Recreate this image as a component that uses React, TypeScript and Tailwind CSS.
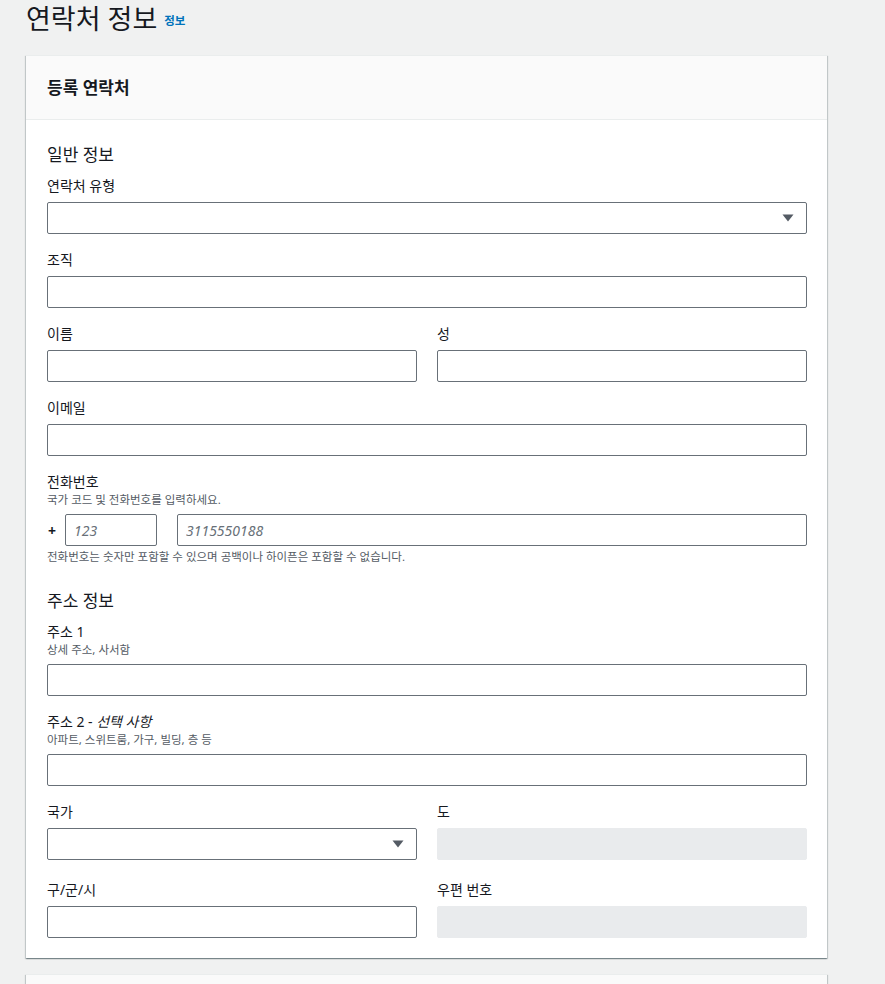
import React from "react";

const font = { fontFamily: '"Noto Sans", "Noto Sans CJK KR", sans-serif' };

function Label({ children, desc }: { children: React.ReactNode; desc?: string }) {
  return (
    <div className="mb-[6px]">
      <div className="text-[14px] leading-[20px] text-[#16191f]">{children}</div>
      {desc && <div className="text-[11.5px] leading-[16px] text-[#545b64]">{desc}</div>}
    </div>
  );
}

function TextInput({ placeholder, disabled }: { placeholder?: string; disabled?: boolean }) {
  if (disabled) {
    return <div className="h-[32px] w-full rounded-[2px] border border-[#e9ebed] bg-[#e9ebed]" />;
  }
  return (
    <input
      placeholder={placeholder}
      className="h-[32px] w-full rounded-[2px] border border-[#687078] bg-white px-[8px] text-[14px] text-[#16191f] outline-none placeholder:italic placeholder:text-[#687078]"
    />
  );
}

function Select() {
  return (
    <div className="relative flex h-[32px] w-full items-center justify-end rounded-[2px] border border-[#687078] bg-white pr-[12px]">
      <svg width="12" height="8" viewBox="0 0 12 8">
        <path d="M0.5 0.5h11L6 7.5z" fill="#545b64" />
      </svg>
    </div>
  );
}

function Field({ label, desc, children, className = "" }: { label: React.ReactNode; desc?: string; children: React.ReactNode; className?: string }) {
  return (
    <div className={className}>
      <Label desc={desc}>{label}</Label>
      {children}
    </div>
  );
}

const cardShadow =
  "shadow-[0_1px_1px_0_rgba(0,28,36,0.3),1px_1px_1px_0_rgba(0,28,36,0.15),-1px_1px_1px_0_rgba(0,28,36,0.15)]";

export default function App() {
  return (
    <div style={font} className="min-h-[984px] w-[885px] bg-[#f0f1f1] pl-[26px]">
      {/* TITLE */}
      <div className="flex h-[55px] items-start">
        <h1 className="text-[27px] leading-[38px] text-[#16191f]">연락처 정보</h1>
        <a className="ml-[7px] mt-[13px] text-[11.5px] font-bold leading-[16px] text-[#0073bb]">정보</a>
      </div>

      {/* CARD */}
      <div className={`w-[801px] border-t border-[#eaeded] bg-white ${cardShadow}`}>
        <div className="flex h-[64px] items-center border-b border-[#eaeded] bg-[#fafafa] pl-[21px] pr-[20px]">
          <h2 className="text-[17px] font-bold leading-[22px] text-[#16191f]">등록 연락처</h2>
        </div>

        <div className="pb-[20px] pl-[21px] pr-[20px] pt-[23px]">
          <h3 className="mb-[9px] text-[17px] leading-[24px] text-[#16191f]">일반 정보</h3>

          <Field label="연락처 유형" className="mb-[16px]">
            <Select />
          </Field>
          <Field label="조직" className="mb-[16px]">
            <TextInput />
          </Field>
          <div className="mb-[16px] grid grid-cols-2 gap-[20px]">
            <Field label="이름">
              <TextInput />
            </Field>
            <Field label="성">
              <TextInput />
            </Field>
          </div>
          <Field label="이메일" className="mb-[16px]">
            <TextInput />
          </Field>

          <div className="mb-[24px]">
            <Label desc="국가 코드 및 전화번호를 입력하세요.">전화번호</Label>
            <div className="flex items-center">
              <span className="w-[18px] pl-[1px] text-[14px] font-bold text-[#16191f]">+</span>
              <div className="w-[92px]">
                <TextInput placeholder="123" />
              </div>
              <div className="ml-[20px] flex-1">
                <TextInput placeholder="3115550188" />
              </div>
            </div>
            <div className="mt-[3px] text-[11.5px] leading-[16px] text-[#545b64]">
              전화번호는 숫자만 포함할 수 있으며 공백이나 하이픈은 포함할 수 없습니다.
            </div>
          </div>

          <h3 className="mb-[9px] text-[17px] leading-[24px] text-[#16191f]">주소 정보</h3>
          <Field label="주소 1" desc="상세 주소, 사서함" className="mb-[16px]">
            <TextInput />
          </Field>
          <Field
            label={
              <>
                주소 2 - <i>선택 사항</i>
              </>
            }
            desc="아파트, 스위트룸, 가구, 빌딩, 층 등"
            className="mb-[16px]"
          >
            <TextInput />
          </Field>
          <div className="mb-[20px] grid grid-cols-2 gap-[20px]">
            <Field label="국가">
              <Select />
            </Field>
            <Field label="도">
              <TextInput disabled />
            </Field>
          </div>
          <div className="grid grid-cols-2 gap-[20px]">
            <Field label="구/군/시">
              <TextInput />
            </Field>
            <Field label="우편 번호">
              <TextInput disabled />
            </Field>
          </div>
        </div>
      </div>

      {/* NEXT CARD */}
      <div className={`mt-[16px] h-[40px] w-[801px] border-t border-[#eaeded] bg-[#fafafa] ${cardShadow}`} />
    </div>
  );
}
